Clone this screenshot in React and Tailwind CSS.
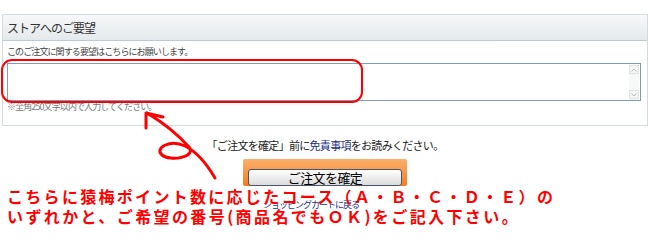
const jp = "font-['Noto_Sans_CJK_JP','Noto_Sans',sans-serif]";

function Scrollbar() {
  return (
    <div className="flex flex-col justify-between w-[10px] h-full py-[1px] bg-[#f7f8f8]">
      <div className="h-[9px] border border-[#dfe3e3] bg-[#f3f5f3] flex items-center justify-center">
        <svg width="6" height="4" viewBox="0 0 6 4"><path d="M0.5 3.5 L3 1 L5.5 3.5" fill="none" stroke="#b7bdbd" strokeWidth="1" /></svg>
      </div>
      <div className="h-[9px] border border-[#dfe3e3] bg-[#f3f5f3] flex items-center justify-center">
        <svg width="6" height="4" viewBox="0 0 6 4"><path d="M0.5 0.5 L3 3 L5.5 0.5" fill="none" stroke="#b7bdbd" strokeWidth="1" /></svg>
      </div>
    </div>
  );
}

function RequestPanel() {
  return (
    <div className="mx-[2px] border border-[#d3dbe0] bg-white">
      <div className="h-[26px] flex items-center px-[4px] border-b border-[#bccad3] bg-linear-to-b from-[#f7f8f9] to-[#e4e9eb]">
        <span className="text-[12px] tracking-[-1px] text-[#333]">ストアへのご要望</span>
      </div>
      <div className="px-[4px] pt-[4px] pb-[13px]">
        <p className="text-[9px] leading-[14px] tracking-[-0.9px] text-[#444]">このご注文に関する要望はこちらにお願いします。</p>
        <div className="mt-[4px] h-[38px] mr-[2px] border border-[#7f9db9] bg-white flex justify-end pr-[1px]">
          <Scrollbar />
        </div>
        <p className="text-[9px] leading-[11px] tracking-[-0.9px] text-[#777]">※全角250文字以内で入力してください。</p>
      </div>
    </div>
  );
}

function Annotations() {
  return (
    <>
      <div className="absolute left-[1px] top-[59px] w-[362px] h-[44px] border-2 border-[#f00] rounded-[11px]" />
      <svg className="absolute left-0 top-0" width="650" height="250" viewBox="0 0 650 250">
        <g fill="none" stroke="#f00" strokeWidth="3" strokeLinecap="round" strokeLinejoin="round">
          <path d="M146 128 L146 113 L163 117" />
          <path d="M147 113 Q172 128 189 147 C197 157 170 162 162 155 C154 148 170 139 185 146 C199 153 208 166 215 178" />
        </g>
      </svg>
      <div className="absolute left-[7px] top-[186px] text-[#f00] font-bold text-[16px] leading-[20px]">
        <p className="tracking-[2.3px]">こちらに猿梅ポイント数に応じたコース（Ａ・Ｂ・Ｃ・Ｄ・Ｅ）の</p>
        <p className="tracking-[2.4px]">いずれかと、ご希望の番号(商品名でもＯＫ)をご記入下さい。</p>
      </div>
    </>
  );
}

export default function App() {
  return (
    <div className={`relative w-[650px] h-[250px] bg-white overflow-hidden ${jp}`}>
      <div className="pt-[14px]">
        <RequestPanel />
        <p className="mt-[12px] text-center text-[11px] leading-[14px] tracking-[-0.7px] text-[#222]">
          「ご注文を確定」前に<a href="#" className="text-[#1b2f86]">免責事項</a>をお読みください。
        </p>
        <div className="mt-[7px] flex justify-center">
          <div className="w-[164px] h-[27px] p-[5px] bg-linear-to-b from-[#fbb06a] to-[#f47a1c] rounded-[2px]">
            <button className="w-full h-full rounded-[3px] border border-[#4a5668] bg-linear-to-b from-white to-[#dcdcdc] text-[13px] leading-none tracking-[-0.6px] text-black">
              ご注文を確定
            </button>
          </div>
        </div>
        <p className="mt-[13px] ml-[263px] text-[9px] leading-[12px] tracking-[-1px] text-[#1b2f86]">ショッピングカートに戻る</p>
      </div>
      <Annotations />
    </div>
  );
}
